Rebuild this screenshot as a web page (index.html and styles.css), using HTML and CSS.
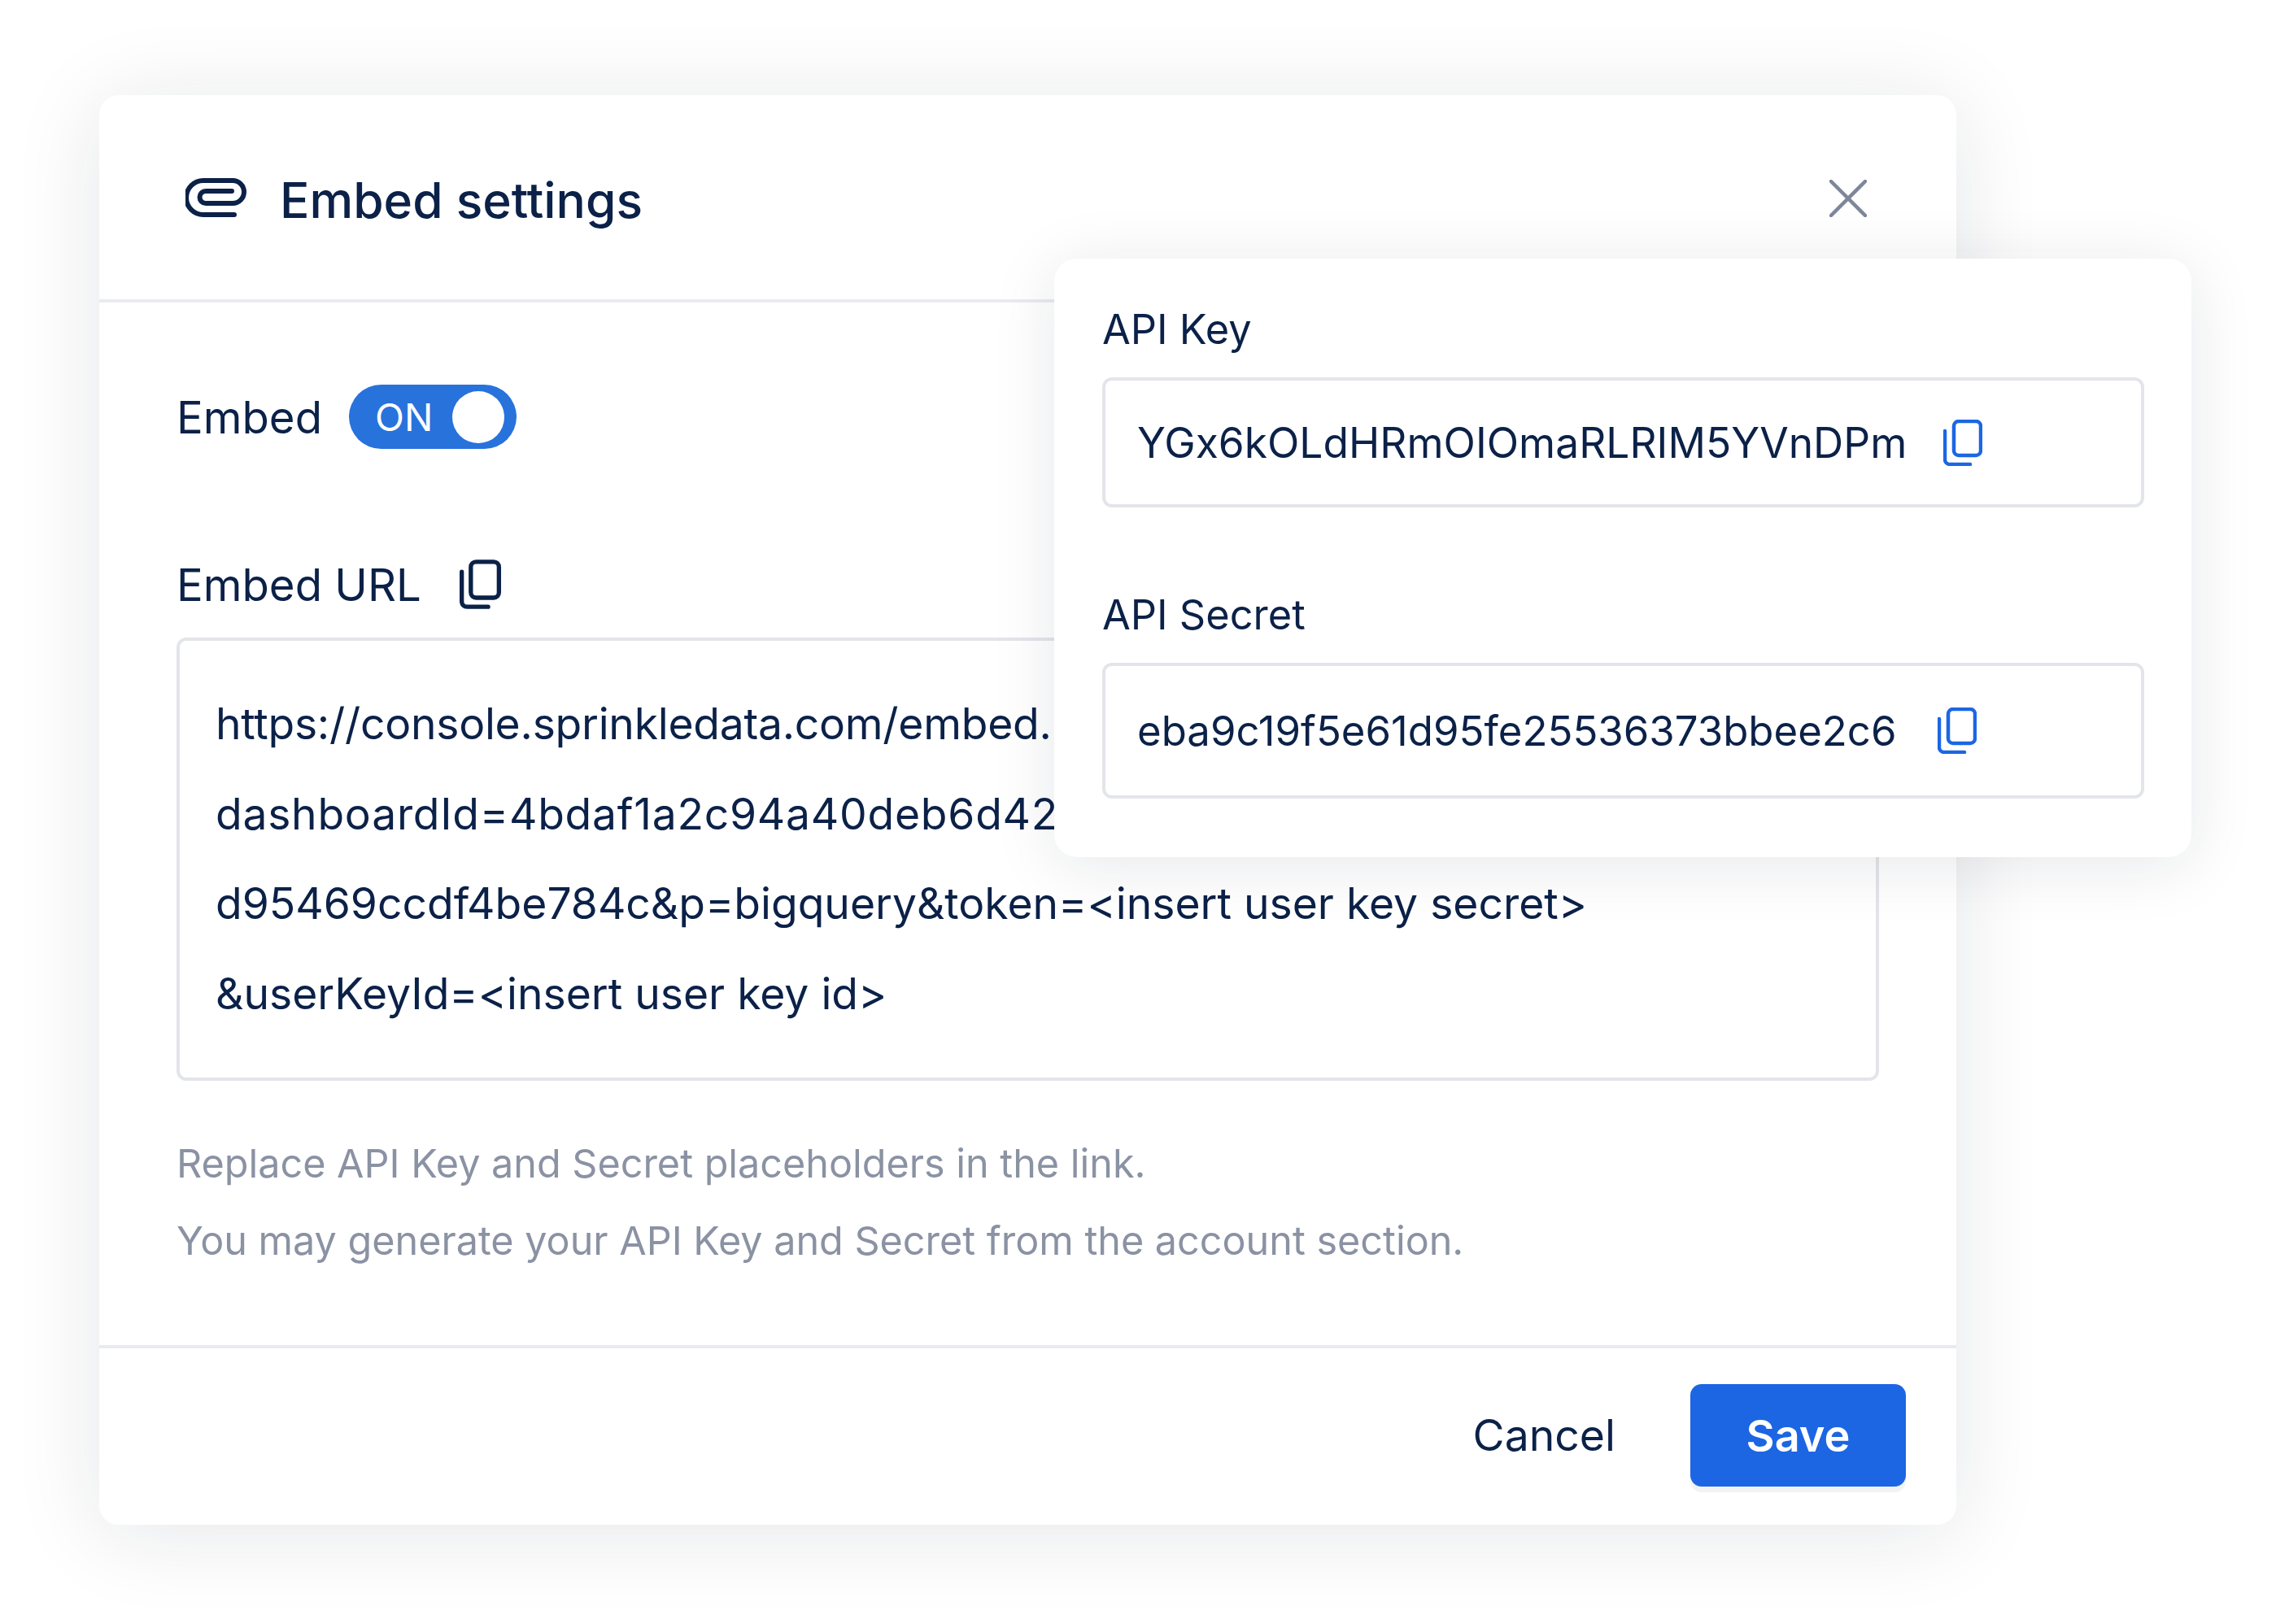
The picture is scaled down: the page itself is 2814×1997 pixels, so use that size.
FILE: index.html
```html
<!DOCTYPE html>
<html lang="en">

<head>
    <meta charset="utf-8">
    <title>Embed settings</title>
    <link rel="stylesheet" href="styles.css">
</head>

<body>
    <section class="modal">
        <header class="modal-head">
            <svg class="clip-icon" viewBox="0 0 76 48" fill="none" stroke="#0b2148" stroke-width="6" stroke-linecap="round">
                <path d="M60 45H22A21 21 0 0 1 22 3H58A14 14 0 0 1 58 31H25A7.500 7.500 0 0 1 25 16H57" />
            </svg>
            <h1>Embed settings</h1>
            <svg class="close-icon" viewBox="0 0 46 46" fill="none" stroke="#7d8799" stroke-width="4.500" stroke-linecap="round">
                <path d="M2 2L44 44M44 2L2 44" />
            </svg>
        </header>

        <div class="modal-body">
            <div class="embed-row">
                <span class="label">Embed</span>
                <div class="toggle">
                    <span class="toggle-text">ON</span>
                    <span class="knob"></span>
                </div>
            </div>

            <div class="url-row">
                <span class="label">Embed URL</span>
                <svg class="copy-icon dark" viewBox="0 0 48 57" fill="none" stroke="currentColor" stroke-width="5" stroke-linecap="round">
                    <rect x="13" y="2.500" width="32.500" height="41.500" rx="6" />
                    <path d="M2.500 14V49A6 6 0 0 0 8.500 54.500H33" />
                </svg>
            </div>

            <div class="url-box">
                <div class="url-first">https://console.sprinkledata.com/embed.html?</div>
                <div class="url-second">dashboardId=4bdaf1a2c94a40deb6d42e7</div>
                <div>d95469ccdf4be784c&amp;p=bigquery&amp;token=&lt;insert user key secret&gt;</div>
                <div>&amp;userKeyId=&lt;insert user key id&gt;</div>
            </div>

            <p class="hint hint-first">Replace API Key and Secret placeholders in the link.</p>
            <p class="hint">You may generate your API Key and Secret from the account section.</p>
        </div>

        <footer class="modal-foot">
            <button class="btn-cancel">Cancel</button>
            <button class="btn-save">Save</button>
        </footer>

        <div class="popover">
            <div class="pop-label">API Key</div>
            <div class="field field-key">
                <span class="key-text">YGx6kOLdHRmOIOmaRLRIM5YVnDPm</span>
                <svg class="copy-icon blue" viewBox="0 0 48 57" fill="none" stroke="currentColor" stroke-width="4.500" stroke-linecap="round">
                    <rect x="13" y="2" width="33" height="42" rx="6" />
                    <path d="M2 14V49A6 6 0 0 0 8 55H33" />
                </svg>
            </div>
            <div class="pop-label pop-label-second">API Secret</div>
            <div class="field field-secret">
                <span class="secret-text">eba9c19f5e61d95fe25536373bbee2c6</span>
                <svg class="copy-icon blue" viewBox="0 0 48 57" fill="none" stroke="currentColor" stroke-width="4.500" stroke-linecap="round">
                    <rect x="13" y="2" width="33" height="42" rx="6" />
                    <path d="M2 14V49A6 6 0 0 0 8 55H33" />
                </svg>
            </div>
        </div>
    </section>
</body>

</html>
```

FILE: styles.css
```css
* {
    box-sizing: border-box;
    margin: 0;
    padding: 0;
}

html,
body {
    height: 100%;
    overflow: hidden;
    background-color: #fff;
}

body {
    font-family: "Inter", "Noto Sans", sans-serif;
    color: #0b2148;
    padding: 117px 0 0 122px;
}

.modal {
    position: relative;
    width: 2283px;
    height: 1758px;
    background-color: #fff;
    border-radius: 24px;
    box-shadow: 0 10px 110px rgba(20, 30, 50, 0.11);
    display: flex;
    flex-direction: column;
}

.modal-head {
    height: 255px;
    border-bottom: 4px solid #e9ebee;
    display: flex;
    align-items: center;
    padding: 0 110px 0 106px;
}

.clip-icon {
    width: 76px;
    height: 48px;
}

h1 {
    font-size: 60.500px;
    font-weight: 500;
    line-height: 70px;
    margin: 6px 0 0 40px;
    flex: 1;
}

.close-icon {
    width: 46px;
    height: 46px;
    margin-top: 2px;
}

.modal-body {
    flex: 1;
    padding: 101px 95px 0;
}

.embed-row {
    display: flex;
    align-items: center;
    height: 79px;
}

.label {
    font-size: 54.500px;
}

.toggle {
    width: 206px;
    height: 79px;
    margin-left: 33px;
    border-radius: 40px;
    background-color: #2872dc;
    display: flex;
    align-items: center;
    padding: 0 15px 0 32px;
    justify-content: space-between;
}

.toggle-text {
    color: #fff;
    font-size: 47px;
}

.knob {
    width: 64px;
    height: 64px;
    border-radius: 50%;
    background-color: #fff;
}

.url-row {
    display: flex;
    align-items: center;
    height: 61px;
    margin-top: 136px;
}

.copy-icon {
    width: 48px;
    height: 57px;
    flex: none;
}

.copy-icon.dark {
    color: #0b2148;
    width: 51px;
    height: 61px;
    margin-left: 47px;
}

.copy-icon.blue {
    color: #1c66e3;
}

.url-box {
    height: 545px;
    margin-top: 35px;
    border: 4px solid #e3e5ea;
    border-radius: 12px;
    padding: 47px 0 0 44px;
    font-size: 53.400px;
    line-height: 110.700px;
    white-space: nowrap;
    overflow: hidden;
}

.url-first {
    letter-spacing: -0.250px;
}

.url-second {
    letter-spacing: 0.750px;
}

.hint {
    font-size: 48.500px;
    line-height: 95px;
    color: #8a92a3;
}

.hint-first {
    margin-top: 54px;
}

.modal-foot {
    height: 221px;
    border-top: 4px solid #e9ebee;
    display: flex;
    align-items: flex-start;
    justify-content: flex-end;
    padding: 44px 62px 0 0;
}

button {
    font-family: inherit;
    border: none;
    background: none;
    cursor: pointer;
}

.btn-cancel {
    height: 124px;
    margin-right: 92px;
    font-size: 53.500px;
    color: #0b2148;
}

.btn-save {
    width: 265px;
    height: 126px;
    border-radius: 14px;
    background-color: #1c66e3;
    color: #fff;
    font-size: 54px;
    font-weight: 600;
    box-shadow: 0 7px 0 #f2f3f4;
}

/* ligger oven på modal */
.popover {
    position: absolute;
    left: 1174px;
    top: 201px;
    width: 1398px;
    height: 736px;
    border-radius: 28px;
    background-color: #fff;
    box-shadow: 0 10px 80px rgba(20, 30, 50, 0.1);
    padding: 53px 58px 0 59px;
}

.pop-label {
    font-size: 50.500px;
    line-height: 68px;
}

.field {
    border: 4px solid #e3e5ea;
    border-radius: 12px;
    display: flex;
    align-items: center;
    padding-left: 39px;
    margin-top: 25px;
}

.field-key {
    height: 160px;
    font-size: 51.500px;
}

.field-secret {
    height: 167px;
    font-size: 50.900px;
}

.pop-label-second {
    margin-top: 98px;
}

.field-key .copy-icon {
    margin-left: 45px;
}

.field-secret .copy-icon {
    margin-left: 50px;
}
```
